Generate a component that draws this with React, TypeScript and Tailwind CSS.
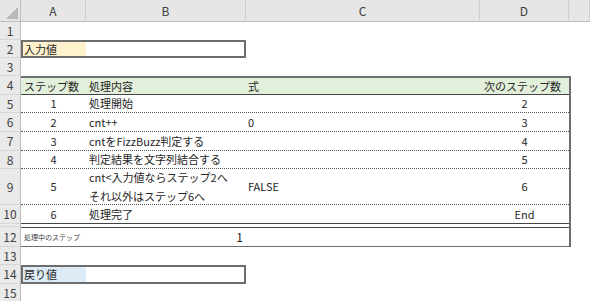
import React from "react";

function RH({ n, cls = "" }: { n?: string; cls?: string }) {
  return (
    <div
      className={`w-[21px] shrink-0 bg-[#e9e9e9] border-r border-b border-r-[#bdbdbd] border-b-[#d6d6d6] flex items-center justify-center text-[12px] text-[#404040] ${cls}`}
    >
      {n}
    </div>
  );
}

function ColH({ label, w }: { label: string; w: string }) {
  return (
    <div
      className={`${w} shrink-0 bg-[#e6e6e6] border-r border-b border-r-[#d0d0d0] border-b-[#bdbdbd] flex items-center justify-center text-[12px] text-[#404040]`}
    >
      {label}
    </div>
  );
}

function Edge() {
  return <div className="w-[21px] shrink-0 border-l-2 border-l-[#6e6e6e]" />;
}

function StepRow({
  n,
  h,
  step,
  text,
  expr,
  next,
}: {
  n: string;
  h: string;
  step: string;
  text: React.ReactNode;
  expr?: string;
  next: string;
}) {
  return (
    <div className={`flex ${h}`}>
      <RH n={n} />
      <div className="flex w-[548px] shrink-0 border-b border-dotted border-b-[#555]">
        <div className="w-[65px] shrink-0 flex items-center justify-center">{step}</div>
        <div className="w-[160px] shrink-0 flex flex-col justify-center pl-[3px] leading-[19px]">{text}</div>
        <div className="w-[234px] shrink-0 flex items-center pl-[2px]">{expr}</div>
        <div className="w-[89px] shrink-0 flex items-center justify-center">{next}</div>
      </div>
      <Edge />
    </div>
  );
}

export default function App() {
  return (
    <div className="w-[590px] h-[301px] overflow-hidden bg-white font-['Noto_Sans_CJK_JP','Noto_Sans',sans-serif] text-[11px] text-[#262626]">
      {/* column header */}
      <div className="flex h-[22px]">
        <div className="relative w-[21px] shrink-0 bg-[#e6e6e6] border-r border-b border-r-[#bdbdbd] border-b-[#bdbdbd]">
          <div className="absolute right-[2px] bottom-[2px] w-0 h-0 border-l-[12px] border-l-transparent border-b-[12px] border-b-[#b8b8b8]" />
        </div>
        <ColH label="A" w="w-[65px]" />
        <ColH label="B" w="w-[160px]" />
        <ColH label="C" w="w-[234px]" />
        <ColH label="D" w="w-[89px]" />
        <ColH label="" w="w-[21px]" />
      </div>

      {/* row 1 */}
      <div className="flex h-[18px]">
        <RH n="1" />
      </div>

      {/* row 2 */}
      <div className="flex h-[18px]">
        <RH n="2" />
        <div className="flex w-[225px] shrink-0 border-2 border-[#6e6e6e]">
          <div className="w-[63px] shrink-0 bg-[#fff2cc] flex items-center pl-[1px]">入力値</div>
          <div className="flex-1" />
        </div>
      </div>

      {/* row 3 */}
      <div className="flex h-[18px]">
        <RH n="3" />
      </div>

      {/* row 4 header */}
      <div className="flex h-[19px]">
        <RH n="4" />
        <div className="flex w-[548px] shrink-0 bg-[#e2efda] border-t-2 border-b border-t-[#6e6e6e] border-b-[#444]">
          <div className="w-[65px] shrink-0 flex items-center pl-[3px]">ステップ数</div>
          <div className="w-[160px] shrink-0 flex items-center pl-[3px]">処理内容</div>
          <div className="w-[234px] shrink-0 flex items-center pl-[2px]">式</div>
          <div className="w-[89px] shrink-0 flex items-center justify-end pr-[8px]">次のステップ数</div>
        </div>
        <Edge />
      </div>

      <StepRow n="5" h="h-[18px]" step="1" text="処理開始" next="2" />
      <StepRow n="6" h="h-[19px]" step="2" text="cnt++" expr="0" next="3" />
      <StepRow n="7" h="h-[19px]" step="3" text="cntをFizzBuzz判定する" next="4" />
      <StepRow n="8" h="h-[18px]" step="4" text="判定結果を文字列結合する" next="5" />
      <StepRow
        n="9"
        h="h-[36px]"
        step="5"
        text={
          <>
            <div>cnt&lt;入力値ならステップ2へ</div>
            <div>それ以外はステップ6へ</div>
          </>
        }
        expr="FALSE"
        next="6"
      />

      {/* row 10 */}
      <div className="flex h-[19px]">
        <RH n="10" />
        <div className="flex w-[548px] shrink-0 border-b border-b-[#444]">
          <div className="w-[65px] shrink-0 flex items-center justify-center">6</div>
          <div className="w-[160px] shrink-0 flex items-center pl-[3px]">処理完了</div>
          <div className="w-[234px] shrink-0" />
          <div className="w-[89px] shrink-0 flex items-center justify-center">End</div>
        </div>
        <Edge />
      </div>

      {/* row 11 (hidden) */}
      <div className="flex h-[3px]">
        <RH cls="border-b-[#9a9a9a]" />
        <div className="w-[548px] shrink-0" />
        <Edge />
      </div>

      {/* row 12 */}
      <div className="flex h-[20px]">
        <RH n="12" />
        <div className="flex w-[548px] shrink-0 border-t border-b border-t-[#444] border-b-[#6e6e6e]">
          <div className="w-[65px] shrink-0 flex items-center pl-[3px] text-[7px] text-[#404040]">処理中のステップ</div>
          <div className="w-[160px] shrink-0 flex items-center justify-end pr-[3px] text-[12px]">1</div>
          <div className="w-[234px] shrink-0" />
          <div className="w-[89px] shrink-0" />
        </div>
        <Edge />
      </div>

      {/* row 13 */}
      <div className="flex h-[18px]">
        <RH n="13" />
      </div>

      {/* row 14 */}
      <div className="flex h-[19px]">
        <RH n="14" />
        <div className="flex w-[225px] shrink-0 border-2 border-[#6e6e6e]">
          <div className="w-[63px] shrink-0 bg-[#ddebf7] flex items-center pl-[1px]">戻り値</div>
          <div className="flex-1" />
        </div>
      </div>

      {/* row 15 */}
      <div className="flex h-[19px]">
        <RH n="15" />
      </div>
    </div>
  );
}
